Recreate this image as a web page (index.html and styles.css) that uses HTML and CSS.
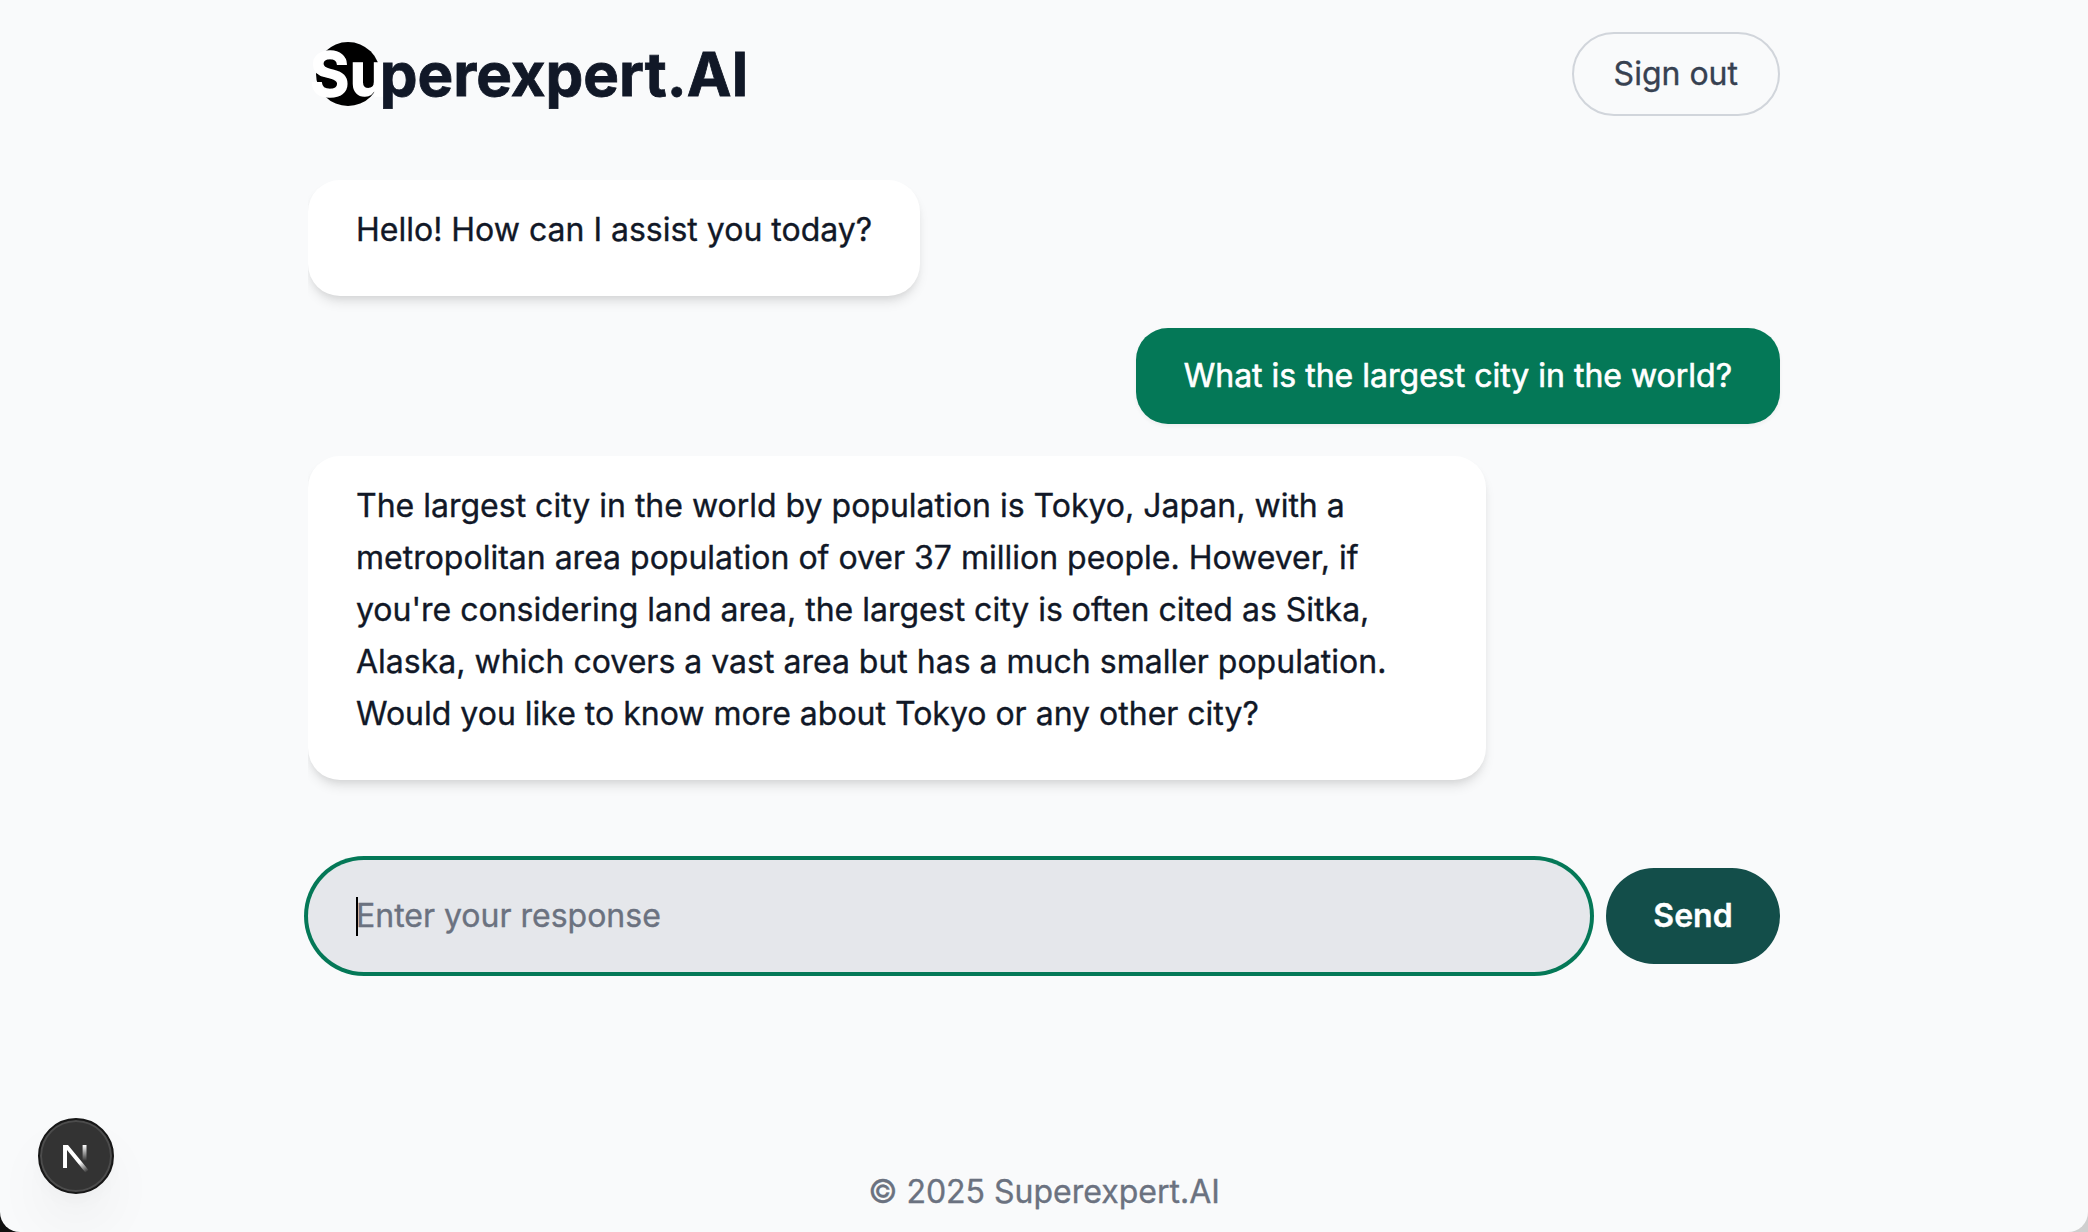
FILE: index.html
```html
<!DOCTYPE html>
<html lang="en">
<head>
<meta charset="utf-8">
<title>Superexpert.AI</title>
<link rel="stylesheet" href="styles.css">
</head>
<body>
<div class="window">
  <div class="page">
    <header class="header">
      <div class="logo"><span class="logo-mark">Su</span><span class="logo-rest">perexpert.AI</span></div>
      <button class="sign-out">Sign out</button>
    </header>
    <main class="messages">
      <div class="bubble assistant"><p>Hello! How can I assist you today?</p></div>
      <div class="bubble user">What is the largest city in the world?</div>
      <div class="bubble assistant"><p>The largest city in the world by population is Tokyo, Japan, with a metropolitan area population of over 37 million people. However, if you're considering land area, the largest city is often cited as Sitka, Alaska, which covers a vast area but has a much smaller population. Would you like to know more about Tokyo or any other city?</p></div>
    </main>
    <div class="composer">
      <div class="input"><span class="caret"></span><span class="placeholder">Enter your response</span></div>
      <button class="send">Send</button>
    </div>
    <footer class="footer">© 2025 Superexpert.AI</footer>
  </div>
  <div class="dev-badge">
    <svg width="28" height="36" viewBox="0 0 28 36">
      <defs>
        <linearGradient id="diag" gradientUnits="userSpaceOnUse" x1="15" y1="20" x2="25" y2="34">
          <stop offset="0" stop-color="#fff"/><stop offset=".3" stop-color="#fff"/><stop offset="1" stop-color="#fff" stop-opacity="0"/>
        </linearGradient>
        <linearGradient id="stem" x1="0" y1="0" x2="0" y2="1">
          <stop offset="0" stop-color="#fff"/><stop offset="1" stop-color="#fff" stop-opacity="0"/>
        </linearGradient>
      </defs>
      <path d="M1.2 7H6L26.5 32L23.4 34.6L5 12V30H1.2Z" fill="url(#diag)"/>
      <path d="M1.2 7H5V30H1.2Z" fill="#fff"/>
      <rect x="20.6" y="7" width="3.9" height="16" fill="url(#stem)"/>
    </svg>
  </div>
</div>
</body>
</html>
```
FILE: styles.css
```css
* { box-sizing: border-box; }
html { background: linear-gradient(90deg, #111 50%, #cfcfcf 50%); }
body {
  margin: 0;
  font-family: Inter, sans-serif;
  font-size: 32px;
  line-height: 48px;
  color: #111827;
  -webkit-text-stroke: .35px currentColor;
}
button { font: inherit; }
.window {
  position: relative;
  height: 1232px;
  overflow: hidden;
  background: #f9fafb;
  border-radius: 0 0 20px 20px;
}
.page {
  width: 1472px;
  height: 100%;
  margin: 0 auto;
  display: flex;
  flex-direction: column;
}
.header {
  display: flex;
  justify-content: space-between;
  align-items: center;
  padding-top: 32px;
}
.logo {
  position: relative;
  padding-left: 2px;
  font-size: 60px;
  line-height: 84px;
  font-weight: 700;
  -webkit-text-stroke-width: .8px;
}
.logo::before {
  content: "";
  position: absolute;
  left: 8px;
  top: 10px;
  width: 64px;
  height: 64px;
  border-radius: 50%;
  background: #000;
}
.logo-mark, .logo-rest { position: relative; }
.logo-mark {
  color: #fff;
  -webkit-text-stroke: 1.4px #fff;
  letter-spacing: .5px;
}
.logo-rest { margin-left: -8px; }
.sign-out {
  height: 84px;
  padding: 16px 40px;
  border: 2px solid #d1d5db;
  border-radius: 42px;
  background: transparent;
  color: #374151;
}
.messages {
  display: flex;
  flex-direction: column;
  gap: 32px;
  margin: 16px -48px 0 0;
  padding: 48px 48px 48px 0;
  overflow: hidden;
}
.bubble {
  max-width: 80%;
  padding: 24px 48px;
  border-radius: 32px;
}
.assistant {
  align-self: flex-start;
  background: #fff;
  box-shadow: 0 8px 12px -2px rgba(0, 0, 0, .1), 0 4px 8px -4px rgba(0, 0, 0, .1);
}
.assistant p {
  margin: 0 0 16px;
  line-height: 52px;
}
.user {
  align-self: flex-end;
  background: #047857;
  color: #fff;
  -webkit-text-stroke: .6px #fff;
  box-shadow: 0 2px 4px rgba(0, 0, 0, .05);
}
.composer {
  display: flex;
  align-items: center;
  gap: 16px;
  margin-top: 32px;
}
.input {
  flex: 1;
  display: flex;
  align-items: center;
  height: 112px;
  padding: 0 48px;
  border-radius: 56px;
  background: #e5e7eb;
  box-shadow: 0 0 0 4px #047857;
}
.caret {
  width: 2px;
  height: 39px;
  margin-right: -2px;
  background: #000;
}
.placeholder {
  color: #6b7280;
  -webkit-text-stroke-color: #6b7280;
}
.send {
  width: 174px;
  height: 96px;
  padding: 0;
  border: 0;
  border-radius: 48px;
  background: #134e4a;
  color: #fff;
  font-weight: 600;
}
.footer {
  margin-top: auto;
  padding-bottom: 16px;
  text-align: center;
  color: #6b7280;
}
.dev-badge {
  position: absolute;
  left: 38px;
  bottom: 38px;
  width: 76px;
  height: 76px;
  display: grid;
  place-items: center;
  border: 2px solid #171717;
  border-radius: 50%;
  background: #333;
  box-shadow: inset 0 0 0 2px #4c4c4c, 0 32px 64px -16px rgba(0, 0, 0, .12), 0 8px 16px rgba(0, 0, 0, .02);
}
```
